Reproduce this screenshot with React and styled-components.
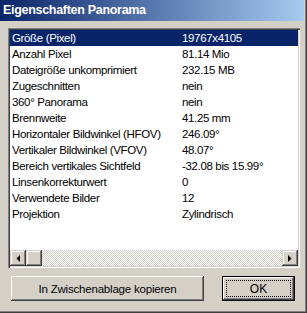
import styled, { createGlobalStyle } from "styled-components";

const rows = [
  ["Größe (Pixel)", "19767x4105"],
  ["Anzahl Pixel", "81.14 Mio"],
  ["Dateigröße unkomprimiert", "232.15 MB"],
  ["Zugeschnitten", "nein"],
  ["360° Panorama", "nein"],
  ["Brennweite", "41.25 mm"],
  ["Horizontaler Bildwinkel (HFOV)", "246.09°"],
  ["Vertikaler Bildwinkel (VFOV)", "48.07°"],
  ["Bereich vertikales Sichtfeld", "-32.08 bis 15.99°"],
  ["Linsenkorrekturwert", "0"],
  ["Verwendete Bilder", "12"],
  ["Projektion", "Zylindrisch"],
];

function Arrow({ dir }) {
  return (
    <svg width="4" height="7" viewBox="0 0 4 7">
      {dir === "left" ? (
        <polygon points="4,0 4,7 0.5,3.5" fill="#000" />
      ) : (
        <polygon points="0,0 0,7 3.5,3.5" fill="#000" />
      )}
    </svg>
  );
}

function App() {
  return (
    <>
      <Global />
      <Window>
        <TitleBar>Eigenschaften Panorama</TitleBar>
        <Body>
          <ListBox>
            <Rows>
              {rows.map(([label, value], index) => (
                <Row key={label} selected={index === 0}>
                  <Label>{label}</Label>
                  <Value>{value}</Value>
                </Row>
              ))}
            </Rows>
            <ScrollBar>
              <ScrollButton>
                <Arrow dir="left" />
              </ScrollButton>
              <ScrollButton />
              <Track />
              <ScrollButton>
                <Arrow dir="right" />
              </ScrollButton>
            </ScrollBar>
          </ListBox>
          <ButtonRow>
            <Button width={193}>In Zwischenablage kopieren</Button>
            <DefaultButton>
              <Focus>OK</Focus>
            </DefaultButton>
          </ButtonRow>
        </Body>
      </Window>
    </>
  );
}

const Global = createGlobalStyle`
  body {
    margin: 0;
    background: #d4d0c8;
    font-family: "Liberation Sans", Arial, sans-serif;
  }
`;

const Window = styled.div`
  width: 307px;
  height: 313px;
  box-sizing: border-box;
  padding: 0 3px 3px 0;
  background: #d4d0c8;
  box-shadow: inset -1px -1px #404040, inset -2px -2px #808080;
  display: flex;
  flex-direction: column;
`;

const TitleBar = styled.div`
  height: 21px;
  line-height: 20px;
  padding-left: 3px;
  color: #fff;
  font-weight: bold;
  font-size: 12.5px;
  letter-spacing: -0.3px;
  font-family: "Liberation Sans", Arial, sans-serif;
  background: linear-gradient(to right, #0a246a, #a6caf0);
`;

const Body = styled.div`
  flex: 1;
  display: flex;
  flex-direction: column;
  padding: 7px 0 0 8px;
`;

const ListBox = styled.div`
  width: 292px;
  height: 240px;
  box-sizing: border-box;
  padding: 2px;
  background: #fff;
  box-shadow: inset 1px 1px #808080, inset 2px 2px #404040,
    inset -1px -1px #fff, inset -2px -2px #d4d0c8;
  display: flex;
  flex-direction: column;
`;

const Rows = styled.div`
  flex: 1;
`;

const Row = styled.div`
  display: flex;
  height: 16px;
  line-height: 16px;
  font-size: 11.5px;
  letter-spacing: -0.35px;
  color: ${(p) => (p.selected ? "#fff" : "#000")};
  background: ${(p) => (p.selected ? "#0a246a" : "transparent")};
`;

const Label = styled.span`
  width: 170px;
  padding-left: 2px;
  white-space: nowrap;
`;

const Value = styled.span`
  white-space: nowrap;
`;

const ScrollBar = styled.div`
  display: flex;
  height: 16px;
`;

const ScrollButton = styled.div`
  width: 16px;
  height: 16px;
  box-sizing: border-box;
  background: #d4d0c8;
  box-shadow: inset -1px -1px #404040, inset 1px 1px #d4d0c8,
    inset -2px -2px #808080, inset 2px 2px #fff;
  display: flex;
  align-items: center;
  justify-content: center;
`;

const Track = styled.div`
  flex: 1;
  background-image: conic-gradient(#fff 25%, #d4d0c8 0 50%, #fff 0 75%, #d4d0c8 0);
  background-size: 2px 2px;
`;

const ButtonRow = styled.div`
  display: flex;
  align-items: flex-start;
  margin-top: 8px;
  padding-left: 3px;
  gap: 18px;
`;

const Button = styled.div`
  width: ${(p) => p.width}px;
  height: 25px;
  box-sizing: border-box;
  display: flex;
  align-items: center;
  justify-content: center;
  font-size: 11.5px;
  letter-spacing: -0.2px;
  color: #000;
  background: #d4d0c8;
  box-shadow: inset -1px -1px #404040, inset 1px 1px #fff,
    inset -2px -2px #808080, inset 2px 2px #d4d0c8;
`;

const DefaultButton = styled.div`
  width: 73px;
  height: 25px;
  box-sizing: border-box;
  border: 1px solid #000;
  padding: 3px;
  background: #d4d0c8;
  box-shadow: inset -1px -1px #404040, inset 1px 1px #fff,
    inset -2px -2px #808080, inset 2px 2px #d4d0c8;
  display: flex;
`;

const Focus = styled.div`
  flex: 1;
  border: 1px dotted #000;
  display: flex;
  align-items: center;
  justify-content: center;
  font-size: 12px;
  color: #000;
`;

export default App;
